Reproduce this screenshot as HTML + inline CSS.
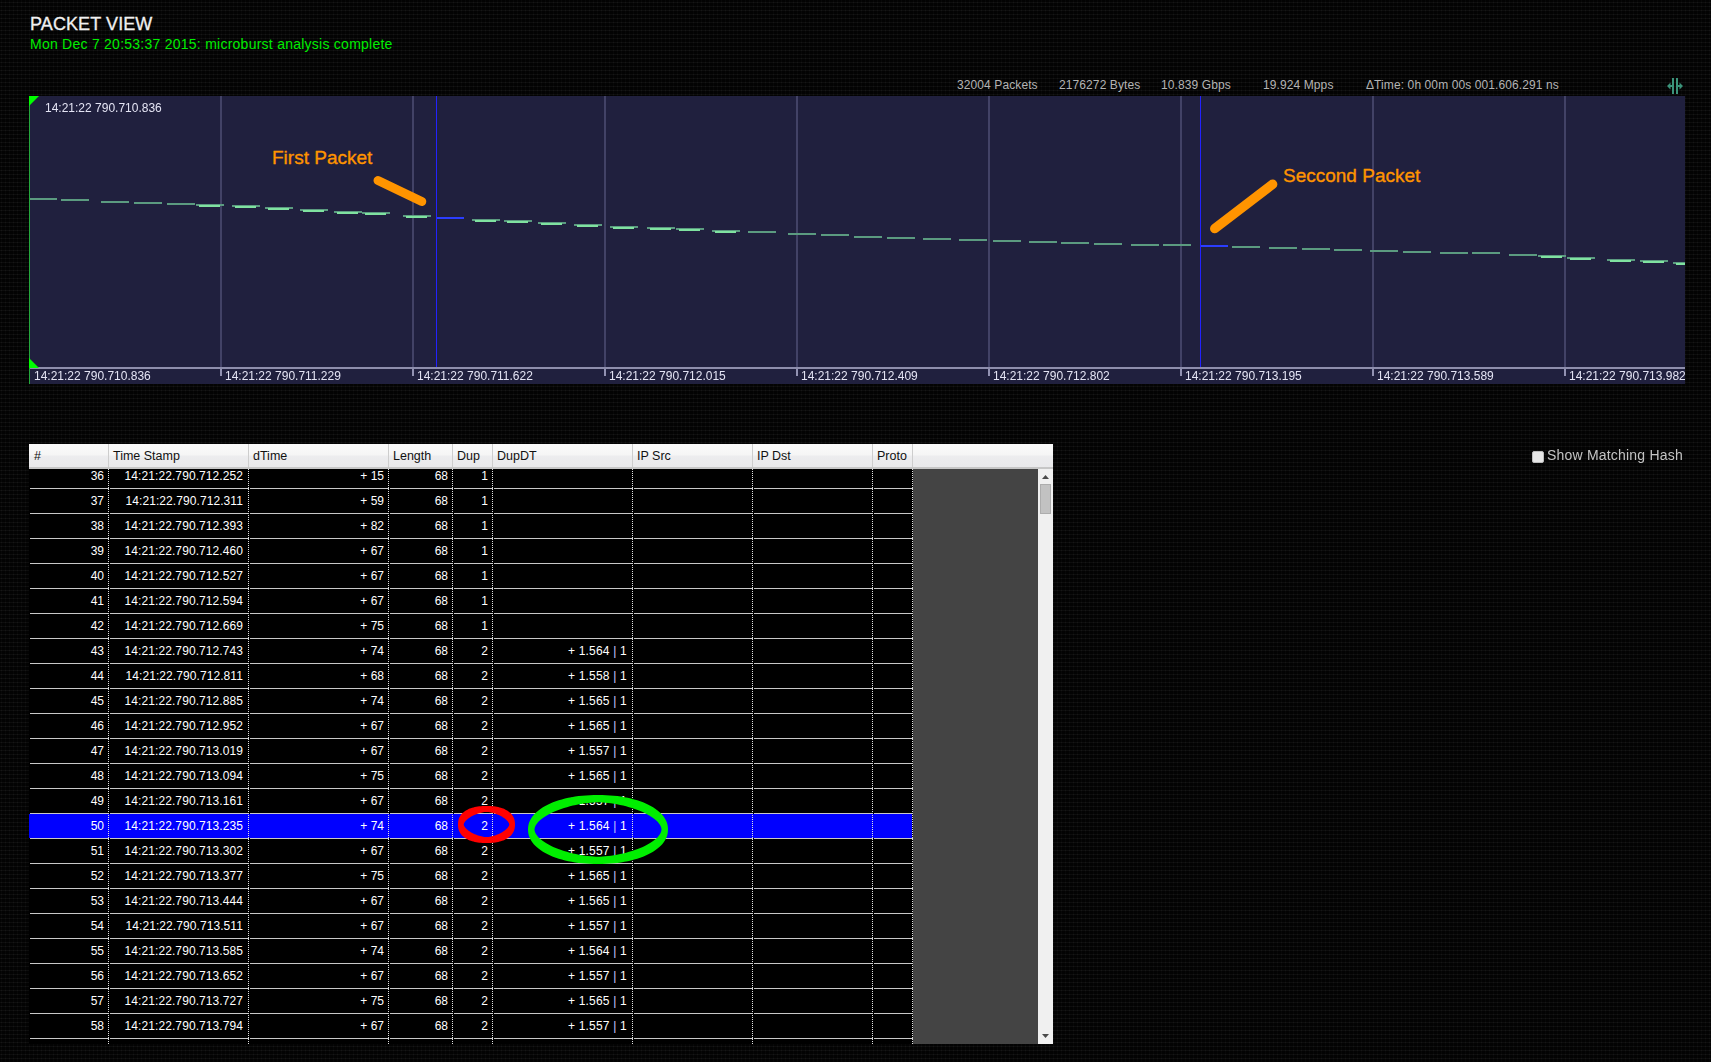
<!DOCTYPE html>
<html><head><meta charset="utf-8"><style>
html,body{margin:0;padding:0;}
body{width:1711px;height:1062px;overflow:hidden;position:relative;background-color:#030303;
font-family:"Liberation Sans", sans-serif;}
.a{position:absolute;}
.title{left:30px;top:13px;font-size:18px;color:#f0f0f0;-webkit-text-stroke:0.3px #f0f0f0;letter-spacing:0.1px;white-space:pre;line-height:22px;}
.sub{left:30px;top:35px;font-size:14px;color:#00ee00;letter-spacing:0.25px;white-space:pre;line-height:18px;}
.stat{top:77px;font-size:12px;letter-spacing:0.1px;color:#b4b4b4;white-space:pre;line-height:16px;}
.chart{left:29px;top:96px;width:1656px;height:288px;background:#20203e;overflow:hidden;}
.clabel{font-size:12px;color:#e4e4f4;white-space:pre;line-height:14px;will-change:transform;}
.ann{font-size:19px;-webkit-text-stroke:0.35px #ff9400;color:#ff9400;white-space:pre;line-height:20px;}
.thead{left:29px;top:444px;width:1024px;height:23px;background:linear-gradient(#fafafa 0%,#f6f6f6 45%,#ececee 55%,#e9e9eb 100%);border-bottom:2px solid #c6c6c6;}
.th{top:448px;font-size:12.5px;color:#111;white-space:pre;line-height:16px;}
.hsep{top:444px;width:1px;height:23px;background:#cdcdcd;}
.tbody{left:29px;top:469px;width:884px;height:575px;background:#000;overflow:hidden;}
.gray{left:913px;top:469px;width:125px;height:575px;background:#444;}
.sb{left:1038px;top:469px;width:15px;height:575px;background:#f0f0f0;}
.hl{height:1px;background:#c8c8c8;}
.td{font-size:12px;color:#fff;text-align:right;white-space:pre;line-height:16px;padding-top:5px;}
.bar{color:#c8c8ff;}
.dot{top:469px;width:1px;height:575px;background-image:linear-gradient(#e0e0e0 50%,transparent 50%);background-size:1px 2px;}
.chk{left:1532px;top:451px;width:10px;height:10px;background:#e6e6e6;border:1px solid #bbb;border-radius:2px;}
.chklbl{left:1547px;top:446px;font-size:14px;color:#c4c4c4;white-space:pre;letter-spacing:0.2px;line-height:18px;}
</style></head><body>
<svg class="a" style="left:0;top:0" width="1711" height="1062"><defs><pattern id="g" x="1" y="2" width="4" height="4" patternUnits="userSpaceOnUse"><rect x="0" y="0" width="4" height="1" fill="#0d0d0d"/><rect x="0" y="0" width="1" height="4" fill="#080808"/><rect x="0" y="0" width="1" height="1" fill="#161616"/></pattern></defs><rect width="1711" height="1062" fill="url(#g)"/></svg>
<div class="a title">PACKET VIEW</div>
<div class="a sub">Mon Dec 7 20:53:37 2015: microburst analysis complete</div>
<div class="a stat" style="left:957px">32004 Packets</div>
<div class="a stat" style="left:1059px">2176272 Bytes</div>
<div class="a stat" style="left:1161px">10.839 Gbps</div>
<div class="a stat" style="left:1263px">19.924 Mpps</div>
<div class="a stat" style="left:1366px">&#916;Time: 0h 00m 00s 001.606.291 ns</div>
<svg class="a" style="left:1660px;top:72px" width="30" height="26" viewBox="1660 72 30 26">
<rect x="1672" y="78" width="2" height="16" fill="#3b937a"/>
<rect x="1676" y="78" width="2" height="16" fill="#3b937a"/>
<polygon points="1667,86 1670.5,82.5 1670.5,85 1672,85 1672,87 1670.5,87 1670.5,89.5" fill="#3b937a"/>
<polygon points="1683,86 1679.5,82.5 1679.5,85 1678,85 1678,87 1679.5,87 1679.5,89.5" fill="#3b937a"/>
</svg>
<div class="a chart"></div>
<svg class="a" style="left:0;top:0" width="1711" height="400" viewBox="0 0 1711 400">
<rect x="220" y="96" width="2" height="271" fill="#424266"/>
<rect x="220" y="369" width="2" height="7" fill="#9292b2"/>
<rect x="412" y="96" width="2" height="271" fill="#424266"/>
<rect x="412" y="369" width="2" height="7" fill="#9292b2"/>
<rect x="604" y="96" width="2" height="271" fill="#424266"/>
<rect x="604" y="369" width="2" height="7" fill="#9292b2"/>
<rect x="796" y="96" width="2" height="271" fill="#424266"/>
<rect x="796" y="369" width="2" height="7" fill="#9292b2"/>
<rect x="988" y="96" width="2" height="271" fill="#424266"/>
<rect x="988" y="369" width="2" height="7" fill="#9292b2"/>
<rect x="1180" y="96" width="2" height="271" fill="#424266"/>
<rect x="1180" y="369" width="2" height="7" fill="#9292b2"/>
<rect x="1372" y="96" width="2" height="271" fill="#424266"/>
<rect x="1372" y="369" width="2" height="7" fill="#9292b2"/>
<rect x="1564" y="96" width="2" height="271" fill="#424266"/>
<rect x="1564" y="369" width="2" height="7" fill="#9292b2"/>
<rect x="29" y="367" width="1656" height="2" fill="#8e8eac"/>
<rect x="29" y="198" width="28" height="2" fill="#5b9b80"/>
<rect x="61" y="199" width="28" height="2" fill="#5b9b80"/>
<rect x="101" y="201" width="28" height="2" fill="#5b9b80"/>
<rect x="134" y="202" width="28" height="2" fill="#5b9b80"/>
<rect x="167" y="203" width="28" height="2" fill="#5b9b80"/>
<rect x="196" y="204" width="28" height="2" fill="#5b9b80"/>
<rect x="199" y="205" width="21" height="2" fill="#7fe2a0"/>
<rect x="232" y="205" width="28" height="2" fill="#5b9b80"/>
<rect x="235" y="206" width="21" height="2" fill="#7fe2a0"/>
<rect x="265" y="207" width="28" height="2" fill="#5b9b80"/>
<rect x="268" y="208" width="21" height="2" fill="#7fe2a0"/>
<rect x="300" y="209" width="28" height="2" fill="#5b9b80"/>
<rect x="303" y="210" width="21" height="2" fill="#7fe2a0"/>
<rect x="334" y="211" width="28" height="2" fill="#5b9b80"/>
<rect x="337" y="212" width="21" height="2" fill="#7fe2a0"/>
<rect x="362" y="212" width="28" height="2" fill="#5b9b80"/>
<rect x="365" y="213" width="21" height="2" fill="#7fe2a0"/>
<rect x="403" y="215" width="28" height="2" fill="#5b9b80"/>
<rect x="406" y="216" width="21" height="2" fill="#7fe2a0"/>
<rect x="436" y="217" width="28" height="2" fill="#2b3dff"/>
<rect x="472" y="219" width="28" height="2" fill="#5b9b80"/>
<rect x="475" y="220" width="21" height="2" fill="#7fe2a0"/>
<rect x="504" y="220" width="28" height="2" fill="#5b9b80"/>
<rect x="507" y="221" width="21" height="2" fill="#7fe2a0"/>
<rect x="538" y="222" width="28" height="2" fill="#5b9b80"/>
<rect x="541" y="223" width="21" height="2" fill="#7fe2a0"/>
<rect x="574" y="224" width="28" height="2" fill="#5b9b80"/>
<rect x="577" y="225" width="21" height="2" fill="#7fe2a0"/>
<rect x="610" y="226" width="28" height="2" fill="#5b9b80"/>
<rect x="613" y="227" width="21" height="2" fill="#7fe2a0"/>
<rect x="647" y="227" width="28" height="2" fill="#5b9b80"/>
<rect x="650" y="228" width="21" height="2" fill="#7fe2a0"/>
<rect x="676" y="228" width="28" height="2" fill="#5b9b80"/>
<rect x="679" y="229" width="21" height="2" fill="#7fe2a0"/>
<rect x="712" y="230" width="28" height="2" fill="#5b9b80"/>
<rect x="715" y="231" width="21" height="2" fill="#7fe2a0"/>
<rect x="748" y="231" width="28" height="2" fill="#5b9b80"/>
<rect x="788" y="233" width="28" height="2" fill="#5b9b80"/>
<rect x="821" y="234" width="28" height="2" fill="#5b9b80"/>
<rect x="854" y="236" width="28" height="2" fill="#5b9b80"/>
<rect x="887" y="237" width="28" height="2" fill="#5b9b80"/>
<rect x="923" y="238" width="28" height="2" fill="#5b9b80"/>
<rect x="959" y="239" width="28" height="2" fill="#5b9b80"/>
<rect x="993" y="240" width="28" height="2" fill="#5b9b80"/>
<rect x="1029" y="241" width="28" height="2" fill="#5b9b80"/>
<rect x="1061" y="242" width="28" height="2" fill="#5b9b80"/>
<rect x="1094" y="243" width="28" height="2" fill="#5b9b80"/>
<rect x="1131" y="244" width="28" height="2" fill="#5b9b80"/>
<rect x="1163" y="244" width="28" height="2" fill="#5b9b80"/>
<rect x="1200" y="245" width="28" height="2" fill="#2b3dff"/>
<rect x="1232" y="246" width="28" height="2" fill="#5b9b80"/>
<rect x="1269" y="247" width="28" height="2" fill="#5b9b80"/>
<rect x="1302" y="248" width="28" height="2" fill="#5b9b80"/>
<rect x="1334" y="249" width="28" height="2" fill="#5b9b80"/>
<rect x="1370" y="250" width="28" height="2" fill="#5b9b80"/>
<rect x="1403" y="251" width="28" height="2" fill="#5b9b80"/>
<rect x="1440" y="252" width="28" height="2" fill="#5b9b80"/>
<rect x="1472" y="252" width="28" height="2" fill="#5b9b80"/>
<rect x="1509" y="254" width="28" height="2" fill="#5b9b80"/>
<rect x="1538" y="255" width="28" height="2" fill="#5b9b80"/>
<rect x="1541" y="256" width="21" height="2" fill="#7fe2a0"/>
<rect x="1567" y="257" width="28" height="2" fill="#5b9b80"/>
<rect x="1570" y="258" width="21" height="2" fill="#7fe2a0"/>
<rect x="1607" y="259" width="28" height="2" fill="#5b9b80"/>
<rect x="1610" y="260" width="21" height="2" fill="#7fe2a0"/>
<rect x="1640" y="260" width="28" height="2" fill="#5b9b80"/>
<rect x="1643" y="261" width="21" height="2" fill="#7fe2a0"/>
<rect x="1673" y="262" width="12" height="2" fill="#5b9b80"/>
<rect x="1676" y="263" width="9" height="2" fill="#7fe2a0"/>
<rect x="436" y="96" width="1" height="271" fill="#2222ff"/>
<rect x="1200" y="96" width="1" height="271" fill="#2222ff"/>
<rect x="29" y="96" width="1" height="288" fill="#25a83c"/>
<polygon points="29,96 39,96 29,106" fill="#00ff00"/>
<polygon points="29,358 29,368 39,368" fill="#00ff00"/>
<line x1="378" y1="180.5" x2="421.8" y2="201.5" stroke="#ff9400" stroke-width="9" stroke-linecap="round"/>
<line x1="1214.8" y1="228.6" x2="1272.6" y2="184.3" stroke="#ff9400" stroke-width="9.5" stroke-linecap="round"/>
</svg>
<div class="a clabel" style="left:45px;top:101px">14:21:22 790.710.836</div>
<div class="a clabel" style="left:34px;top:369px;width:1651px;overflow:hidden">14:21:22 790.710.836</div>
<div class="a clabel" style="left:225px;top:369px;width:1460px;overflow:hidden">14:21:22 790.711.229</div>
<div class="a clabel" style="left:417px;top:369px;width:1268px;overflow:hidden">14:21:22 790.711.622</div>
<div class="a clabel" style="left:609px;top:369px;width:1076px;overflow:hidden">14:21:22 790.712.015</div>
<div class="a clabel" style="left:801px;top:369px;width:884px;overflow:hidden">14:21:22 790.712.409</div>
<div class="a clabel" style="left:993px;top:369px;width:692px;overflow:hidden">14:21:22 790.712.802</div>
<div class="a clabel" style="left:1185px;top:369px;width:500px;overflow:hidden">14:21:22 790.713.195</div>
<div class="a clabel" style="left:1377px;top:369px;width:308px;overflow:hidden">14:21:22 790.713.589</div>
<div class="a clabel" style="left:1569px;top:369px;width:116px;overflow:hidden">14:21:22 790.713.982</div>
<div class="a ann" style="left:272px;top:148px">First Packet</div>
<div class="a ann" style="left:1283px;top:166px">Seccond Packet</div>
<div class="a thead"></div>
<div class="a th" style="left:34px">#</div><div class="a th" style="left:113px">Time Stamp</div><div class="a th" style="left:253px">dTime</div><div class="a th" style="left:393px">Length</div><div class="a th" style="left:457px">Dup</div><div class="a th" style="left:497px">DupDT</div><div class="a th" style="left:637px">IP Src</div><div class="a th" style="left:757px">IP Dst</div><div class="a th" style="left:877px">Proto</div><div class="a hsep" style="left:108px"></div><div class="a hsep" style="left:248px"></div><div class="a hsep" style="left:388px"></div><div class="a hsep" style="left:452px"></div><div class="a hsep" style="left:492px"></div><div class="a hsep" style="left:632px"></div><div class="a hsep" style="left:752px"></div><div class="a hsep" style="left:872px"></div><div class="a hsep" style="left:912px"></div>
<div class="a tbody">
<div style="position:absolute;left:-29px;top:-469px;width:1100px;height:1100px">
<div class="a hl" style="left:30px;top:488px;width:79px"></div>
<div class="a hl" style="left:110px;top:488px;width:139px"></div>
<div class="a hl" style="left:250px;top:488px;width:139px"></div>
<div class="a hl" style="left:390px;top:488px;width:63px"></div>
<div class="a hl" style="left:454px;top:488px;width:39px"></div>
<div class="a hl" style="left:494px;top:488px;width:139px"></div>
<div class="a hl" style="left:634px;top:488px;width:119px"></div>
<div class="a hl" style="left:754px;top:488px;width:119px"></div>
<div class="a hl" style="left:874px;top:488px;width:39px"></div>
<div class="a td" style="left:29px;top:463px;width:75px;">36</div>
<div class="a td" style="left:108px;top:463px;width:135px;letter-spacing:0.08px;">14:21:22.790.712.252</div>
<div class="a td" style="left:248px;top:463px;width:136px;">+ 15</div>
<div class="a td" style="left:388px;top:463px;width:60px;">68</div>
<div class="a td" style="left:452px;top:463px;width:36px;">1</div>
<div class="a hl" style="left:30px;top:513px;width:79px"></div>
<div class="a hl" style="left:110px;top:513px;width:139px"></div>
<div class="a hl" style="left:250px;top:513px;width:139px"></div>
<div class="a hl" style="left:390px;top:513px;width:63px"></div>
<div class="a hl" style="left:454px;top:513px;width:39px"></div>
<div class="a hl" style="left:494px;top:513px;width:139px"></div>
<div class="a hl" style="left:634px;top:513px;width:119px"></div>
<div class="a hl" style="left:754px;top:513px;width:119px"></div>
<div class="a hl" style="left:874px;top:513px;width:39px"></div>
<div class="a td" style="left:29px;top:488px;width:75px;">37</div>
<div class="a td" style="left:108px;top:488px;width:135px;letter-spacing:0.08px;">14:21:22.790.712.311</div>
<div class="a td" style="left:248px;top:488px;width:136px;">+ 59</div>
<div class="a td" style="left:388px;top:488px;width:60px;">68</div>
<div class="a td" style="left:452px;top:488px;width:36px;">1</div>
<div class="a hl" style="left:30px;top:538px;width:79px"></div>
<div class="a hl" style="left:110px;top:538px;width:139px"></div>
<div class="a hl" style="left:250px;top:538px;width:139px"></div>
<div class="a hl" style="left:390px;top:538px;width:63px"></div>
<div class="a hl" style="left:454px;top:538px;width:39px"></div>
<div class="a hl" style="left:494px;top:538px;width:139px"></div>
<div class="a hl" style="left:634px;top:538px;width:119px"></div>
<div class="a hl" style="left:754px;top:538px;width:119px"></div>
<div class="a hl" style="left:874px;top:538px;width:39px"></div>
<div class="a td" style="left:29px;top:513px;width:75px;">38</div>
<div class="a td" style="left:108px;top:513px;width:135px;letter-spacing:0.08px;">14:21:22.790.712.393</div>
<div class="a td" style="left:248px;top:513px;width:136px;">+ 82</div>
<div class="a td" style="left:388px;top:513px;width:60px;">68</div>
<div class="a td" style="left:452px;top:513px;width:36px;">1</div>
<div class="a hl" style="left:30px;top:563px;width:79px"></div>
<div class="a hl" style="left:110px;top:563px;width:139px"></div>
<div class="a hl" style="left:250px;top:563px;width:139px"></div>
<div class="a hl" style="left:390px;top:563px;width:63px"></div>
<div class="a hl" style="left:454px;top:563px;width:39px"></div>
<div class="a hl" style="left:494px;top:563px;width:139px"></div>
<div class="a hl" style="left:634px;top:563px;width:119px"></div>
<div class="a hl" style="left:754px;top:563px;width:119px"></div>
<div class="a hl" style="left:874px;top:563px;width:39px"></div>
<div class="a td" style="left:29px;top:538px;width:75px;">39</div>
<div class="a td" style="left:108px;top:538px;width:135px;letter-spacing:0.08px;">14:21:22.790.712.460</div>
<div class="a td" style="left:248px;top:538px;width:136px;">+ 67</div>
<div class="a td" style="left:388px;top:538px;width:60px;">68</div>
<div class="a td" style="left:452px;top:538px;width:36px;">1</div>
<div class="a hl" style="left:30px;top:588px;width:79px"></div>
<div class="a hl" style="left:110px;top:588px;width:139px"></div>
<div class="a hl" style="left:250px;top:588px;width:139px"></div>
<div class="a hl" style="left:390px;top:588px;width:63px"></div>
<div class="a hl" style="left:454px;top:588px;width:39px"></div>
<div class="a hl" style="left:494px;top:588px;width:139px"></div>
<div class="a hl" style="left:634px;top:588px;width:119px"></div>
<div class="a hl" style="left:754px;top:588px;width:119px"></div>
<div class="a hl" style="left:874px;top:588px;width:39px"></div>
<div class="a td" style="left:29px;top:563px;width:75px;">40</div>
<div class="a td" style="left:108px;top:563px;width:135px;letter-spacing:0.08px;">14:21:22.790.712.527</div>
<div class="a td" style="left:248px;top:563px;width:136px;">+ 67</div>
<div class="a td" style="left:388px;top:563px;width:60px;">68</div>
<div class="a td" style="left:452px;top:563px;width:36px;">1</div>
<div class="a hl" style="left:30px;top:613px;width:79px"></div>
<div class="a hl" style="left:110px;top:613px;width:139px"></div>
<div class="a hl" style="left:250px;top:613px;width:139px"></div>
<div class="a hl" style="left:390px;top:613px;width:63px"></div>
<div class="a hl" style="left:454px;top:613px;width:39px"></div>
<div class="a hl" style="left:494px;top:613px;width:139px"></div>
<div class="a hl" style="left:634px;top:613px;width:119px"></div>
<div class="a hl" style="left:754px;top:613px;width:119px"></div>
<div class="a hl" style="left:874px;top:613px;width:39px"></div>
<div class="a td" style="left:29px;top:588px;width:75px;">41</div>
<div class="a td" style="left:108px;top:588px;width:135px;letter-spacing:0.08px;">14:21:22.790.712.594</div>
<div class="a td" style="left:248px;top:588px;width:136px;">+ 67</div>
<div class="a td" style="left:388px;top:588px;width:60px;">68</div>
<div class="a td" style="left:452px;top:588px;width:36px;">1</div>
<div class="a hl" style="left:30px;top:638px;width:79px"></div>
<div class="a hl" style="left:110px;top:638px;width:139px"></div>
<div class="a hl" style="left:250px;top:638px;width:139px"></div>
<div class="a hl" style="left:390px;top:638px;width:63px"></div>
<div class="a hl" style="left:454px;top:638px;width:39px"></div>
<div class="a hl" style="left:494px;top:638px;width:139px"></div>
<div class="a hl" style="left:634px;top:638px;width:119px"></div>
<div class="a hl" style="left:754px;top:638px;width:119px"></div>
<div class="a hl" style="left:874px;top:638px;width:39px"></div>
<div class="a td" style="left:29px;top:613px;width:75px;">42</div>
<div class="a td" style="left:108px;top:613px;width:135px;letter-spacing:0.08px;">14:21:22.790.712.669</div>
<div class="a td" style="left:248px;top:613px;width:136px;">+ 75</div>
<div class="a td" style="left:388px;top:613px;width:60px;">68</div>
<div class="a td" style="left:452px;top:613px;width:36px;">1</div>
<div class="a hl" style="left:30px;top:663px;width:79px"></div>
<div class="a hl" style="left:110px;top:663px;width:139px"></div>
<div class="a hl" style="left:250px;top:663px;width:139px"></div>
<div class="a hl" style="left:390px;top:663px;width:63px"></div>
<div class="a hl" style="left:454px;top:663px;width:39px"></div>
<div class="a hl" style="left:494px;top:663px;width:139px"></div>
<div class="a hl" style="left:634px;top:663px;width:119px"></div>
<div class="a hl" style="left:754px;top:663px;width:119px"></div>
<div class="a hl" style="left:874px;top:663px;width:39px"></div>
<div class="a td" style="left:29px;top:638px;width:75px;">43</div>
<div class="a td" style="left:108px;top:638px;width:135px;letter-spacing:0.08px;">14:21:22.790.712.743</div>
<div class="a td" style="left:248px;top:638px;width:136px;">+ 74</div>
<div class="a td" style="left:388px;top:638px;width:60px;">68</div>
<div class="a td" style="left:452px;top:638px;width:36px;">2</div>
<div class="a td" style="left:492px;top:638px;width:135px;letter-spacing:0.2px;">+ 1.564 <span class="bar">|</span> 1</div>
<div class="a hl" style="left:30px;top:688px;width:79px"></div>
<div class="a hl" style="left:110px;top:688px;width:139px"></div>
<div class="a hl" style="left:250px;top:688px;width:139px"></div>
<div class="a hl" style="left:390px;top:688px;width:63px"></div>
<div class="a hl" style="left:454px;top:688px;width:39px"></div>
<div class="a hl" style="left:494px;top:688px;width:139px"></div>
<div class="a hl" style="left:634px;top:688px;width:119px"></div>
<div class="a hl" style="left:754px;top:688px;width:119px"></div>
<div class="a hl" style="left:874px;top:688px;width:39px"></div>
<div class="a td" style="left:29px;top:663px;width:75px;">44</div>
<div class="a td" style="left:108px;top:663px;width:135px;letter-spacing:0.08px;">14:21:22.790.712.811</div>
<div class="a td" style="left:248px;top:663px;width:136px;">+ 68</div>
<div class="a td" style="left:388px;top:663px;width:60px;">68</div>
<div class="a td" style="left:452px;top:663px;width:36px;">2</div>
<div class="a td" style="left:492px;top:663px;width:135px;letter-spacing:0.2px;">+ 1.558 <span class="bar">|</span> 1</div>
<div class="a hl" style="left:30px;top:713px;width:79px"></div>
<div class="a hl" style="left:110px;top:713px;width:139px"></div>
<div class="a hl" style="left:250px;top:713px;width:139px"></div>
<div class="a hl" style="left:390px;top:713px;width:63px"></div>
<div class="a hl" style="left:454px;top:713px;width:39px"></div>
<div class="a hl" style="left:494px;top:713px;width:139px"></div>
<div class="a hl" style="left:634px;top:713px;width:119px"></div>
<div class="a hl" style="left:754px;top:713px;width:119px"></div>
<div class="a hl" style="left:874px;top:713px;width:39px"></div>
<div class="a td" style="left:29px;top:688px;width:75px;">45</div>
<div class="a td" style="left:108px;top:688px;width:135px;letter-spacing:0.08px;">14:21:22.790.712.885</div>
<div class="a td" style="left:248px;top:688px;width:136px;">+ 74</div>
<div class="a td" style="left:388px;top:688px;width:60px;">68</div>
<div class="a td" style="left:452px;top:688px;width:36px;">2</div>
<div class="a td" style="left:492px;top:688px;width:135px;letter-spacing:0.2px;">+ 1.565 <span class="bar">|</span> 1</div>
<div class="a hl" style="left:30px;top:738px;width:79px"></div>
<div class="a hl" style="left:110px;top:738px;width:139px"></div>
<div class="a hl" style="left:250px;top:738px;width:139px"></div>
<div class="a hl" style="left:390px;top:738px;width:63px"></div>
<div class="a hl" style="left:454px;top:738px;width:39px"></div>
<div class="a hl" style="left:494px;top:738px;width:139px"></div>
<div class="a hl" style="left:634px;top:738px;width:119px"></div>
<div class="a hl" style="left:754px;top:738px;width:119px"></div>
<div class="a hl" style="left:874px;top:738px;width:39px"></div>
<div class="a td" style="left:29px;top:713px;width:75px;">46</div>
<div class="a td" style="left:108px;top:713px;width:135px;letter-spacing:0.08px;">14:21:22.790.712.952</div>
<div class="a td" style="left:248px;top:713px;width:136px;">+ 67</div>
<div class="a td" style="left:388px;top:713px;width:60px;">68</div>
<div class="a td" style="left:452px;top:713px;width:36px;">2</div>
<div class="a td" style="left:492px;top:713px;width:135px;letter-spacing:0.2px;">+ 1.565 <span class="bar">|</span> 1</div>
<div class="a hl" style="left:30px;top:763px;width:79px"></div>
<div class="a hl" style="left:110px;top:763px;width:139px"></div>
<div class="a hl" style="left:250px;top:763px;width:139px"></div>
<div class="a hl" style="left:390px;top:763px;width:63px"></div>
<div class="a hl" style="left:454px;top:763px;width:39px"></div>
<div class="a hl" style="left:494px;top:763px;width:139px"></div>
<div class="a hl" style="left:634px;top:763px;width:119px"></div>
<div class="a hl" style="left:754px;top:763px;width:119px"></div>
<div class="a hl" style="left:874px;top:763px;width:39px"></div>
<div class="a td" style="left:29px;top:738px;width:75px;">47</div>
<div class="a td" style="left:108px;top:738px;width:135px;letter-spacing:0.08px;">14:21:22.790.713.019</div>
<div class="a td" style="left:248px;top:738px;width:136px;">+ 67</div>
<div class="a td" style="left:388px;top:738px;width:60px;">68</div>
<div class="a td" style="left:452px;top:738px;width:36px;">2</div>
<div class="a td" style="left:492px;top:738px;width:135px;letter-spacing:0.2px;">+ 1.557 <span class="bar">|</span> 1</div>
<div class="a hl" style="left:30px;top:788px;width:79px"></div>
<div class="a hl" style="left:110px;top:788px;width:139px"></div>
<div class="a hl" style="left:250px;top:788px;width:139px"></div>
<div class="a hl" style="left:390px;top:788px;width:63px"></div>
<div class="a hl" style="left:454px;top:788px;width:39px"></div>
<div class="a hl" style="left:494px;top:788px;width:139px"></div>
<div class="a hl" style="left:634px;top:788px;width:119px"></div>
<div class="a hl" style="left:754px;top:788px;width:119px"></div>
<div class="a hl" style="left:874px;top:788px;width:39px"></div>
<div class="a td" style="left:29px;top:763px;width:75px;">48</div>
<div class="a td" style="left:108px;top:763px;width:135px;letter-spacing:0.08px;">14:21:22.790.713.094</div>
<div class="a td" style="left:248px;top:763px;width:136px;">+ 75</div>
<div class="a td" style="left:388px;top:763px;width:60px;">68</div>
<div class="a td" style="left:452px;top:763px;width:36px;">2</div>
<div class="a td" style="left:492px;top:763px;width:135px;letter-spacing:0.2px;">+ 1.565 <span class="bar">|</span> 1</div>
<div class="a hl" style="left:30px;top:813px;width:79px"></div>
<div class="a hl" style="left:110px;top:813px;width:139px"></div>
<div class="a hl" style="left:250px;top:813px;width:139px"></div>
<div class="a hl" style="left:390px;top:813px;width:63px"></div>
<div class="a hl" style="left:454px;top:813px;width:39px"></div>
<div class="a hl" style="left:494px;top:813px;width:139px"></div>
<div class="a hl" style="left:634px;top:813px;width:119px"></div>
<div class="a hl" style="left:754px;top:813px;width:119px"></div>
<div class="a hl" style="left:874px;top:813px;width:39px"></div>
<div class="a td" style="left:29px;top:788px;width:75px;">49</div>
<div class="a td" style="left:108px;top:788px;width:135px;letter-spacing:0.08px;">14:21:22.790.713.161</div>
<div class="a td" style="left:248px;top:788px;width:136px;">+ 67</div>
<div class="a td" style="left:388px;top:788px;width:60px;">68</div>
<div class="a td" style="left:452px;top:788px;width:36px;">2</div>
<div class="a td" style="left:492px;top:788px;width:135px;letter-spacing:0.2px;">+ 1.557 <span class="bar">|</span> 1</div>
<div class="a" style="left:29px;top:814px;width:883px;height:24px;background:#0000ff"></div>
<div class="a hl" style="left:30px;top:838px;width:79px"></div>
<div class="a hl" style="left:110px;top:838px;width:139px"></div>
<div class="a hl" style="left:250px;top:838px;width:139px"></div>
<div class="a hl" style="left:390px;top:838px;width:63px"></div>
<div class="a hl" style="left:454px;top:838px;width:39px"></div>
<div class="a hl" style="left:494px;top:838px;width:139px"></div>
<div class="a hl" style="left:634px;top:838px;width:119px"></div>
<div class="a hl" style="left:754px;top:838px;width:119px"></div>
<div class="a hl" style="left:874px;top:838px;width:39px"></div>
<div class="a td" style="left:29px;top:813px;width:75px;">50</div>
<div class="a td" style="left:108px;top:813px;width:135px;letter-spacing:0.08px;">14:21:22.790.713.235</div>
<div class="a td" style="left:248px;top:813px;width:136px;">+ 74</div>
<div class="a td" style="left:388px;top:813px;width:60px;">68</div>
<div class="a td" style="left:452px;top:813px;width:36px;">2</div>
<div class="a td" style="left:492px;top:813px;width:135px;letter-spacing:0.2px;">+ 1.564 <span class="bar">|</span> 1</div>
<div class="a hl" style="left:30px;top:863px;width:79px"></div>
<div class="a hl" style="left:110px;top:863px;width:139px"></div>
<div class="a hl" style="left:250px;top:863px;width:139px"></div>
<div class="a hl" style="left:390px;top:863px;width:63px"></div>
<div class="a hl" style="left:454px;top:863px;width:39px"></div>
<div class="a hl" style="left:494px;top:863px;width:139px"></div>
<div class="a hl" style="left:634px;top:863px;width:119px"></div>
<div class="a hl" style="left:754px;top:863px;width:119px"></div>
<div class="a hl" style="left:874px;top:863px;width:39px"></div>
<div class="a td" style="left:29px;top:838px;width:75px;">51</div>
<div class="a td" style="left:108px;top:838px;width:135px;letter-spacing:0.08px;">14:21:22.790.713.302</div>
<div class="a td" style="left:248px;top:838px;width:136px;">+ 67</div>
<div class="a td" style="left:388px;top:838px;width:60px;">68</div>
<div class="a td" style="left:452px;top:838px;width:36px;">2</div>
<div class="a td" style="left:492px;top:838px;width:135px;letter-spacing:0.2px;">+ 1.557 <span class="bar">|</span> 1</div>
<div class="a hl" style="left:30px;top:888px;width:79px"></div>
<div class="a hl" style="left:110px;top:888px;width:139px"></div>
<div class="a hl" style="left:250px;top:888px;width:139px"></div>
<div class="a hl" style="left:390px;top:888px;width:63px"></div>
<div class="a hl" style="left:454px;top:888px;width:39px"></div>
<div class="a hl" style="left:494px;top:888px;width:139px"></div>
<div class="a hl" style="left:634px;top:888px;width:119px"></div>
<div class="a hl" style="left:754px;top:888px;width:119px"></div>
<div class="a hl" style="left:874px;top:888px;width:39px"></div>
<div class="a td" style="left:29px;top:863px;width:75px;">52</div>
<div class="a td" style="left:108px;top:863px;width:135px;letter-spacing:0.08px;">14:21:22.790.713.377</div>
<div class="a td" style="left:248px;top:863px;width:136px;">+ 75</div>
<div class="a td" style="left:388px;top:863px;width:60px;">68</div>
<div class="a td" style="left:452px;top:863px;width:36px;">2</div>
<div class="a td" style="left:492px;top:863px;width:135px;letter-spacing:0.2px;">+ 1.565 <span class="bar">|</span> 1</div>
<div class="a hl" style="left:30px;top:913px;width:79px"></div>
<div class="a hl" style="left:110px;top:913px;width:139px"></div>
<div class="a hl" style="left:250px;top:913px;width:139px"></div>
<div class="a hl" style="left:390px;top:913px;width:63px"></div>
<div class="a hl" style="left:454px;top:913px;width:39px"></div>
<div class="a hl" style="left:494px;top:913px;width:139px"></div>
<div class="a hl" style="left:634px;top:913px;width:119px"></div>
<div class="a hl" style="left:754px;top:913px;width:119px"></div>
<div class="a hl" style="left:874px;top:913px;width:39px"></div>
<div class="a td" style="left:29px;top:888px;width:75px;">53</div>
<div class="a td" style="left:108px;top:888px;width:135px;letter-spacing:0.08px;">14:21:22.790.713.444</div>
<div class="a td" style="left:248px;top:888px;width:136px;">+ 67</div>
<div class="a td" style="left:388px;top:888px;width:60px;">68</div>
<div class="a td" style="left:452px;top:888px;width:36px;">2</div>
<div class="a td" style="left:492px;top:888px;width:135px;letter-spacing:0.2px;">+ 1.565 <span class="bar">|</span> 1</div>
<div class="a hl" style="left:30px;top:938px;width:79px"></div>
<div class="a hl" style="left:110px;top:938px;width:139px"></div>
<div class="a hl" style="left:250px;top:938px;width:139px"></div>
<div class="a hl" style="left:390px;top:938px;width:63px"></div>
<div class="a hl" style="left:454px;top:938px;width:39px"></div>
<div class="a hl" style="left:494px;top:938px;width:139px"></div>
<div class="a hl" style="left:634px;top:938px;width:119px"></div>
<div class="a hl" style="left:754px;top:938px;width:119px"></div>
<div class="a hl" style="left:874px;top:938px;width:39px"></div>
<div class="a td" style="left:29px;top:913px;width:75px;">54</div>
<div class="a td" style="left:108px;top:913px;width:135px;letter-spacing:0.08px;">14:21:22.790.713.511</div>
<div class="a td" style="left:248px;top:913px;width:136px;">+ 67</div>
<div class="a td" style="left:388px;top:913px;width:60px;">68</div>
<div class="a td" style="left:452px;top:913px;width:36px;">2</div>
<div class="a td" style="left:492px;top:913px;width:135px;letter-spacing:0.2px;">+ 1.557 <span class="bar">|</span> 1</div>
<div class="a hl" style="left:30px;top:963px;width:79px"></div>
<div class="a hl" style="left:110px;top:963px;width:139px"></div>
<div class="a hl" style="left:250px;top:963px;width:139px"></div>
<div class="a hl" style="left:390px;top:963px;width:63px"></div>
<div class="a hl" style="left:454px;top:963px;width:39px"></div>
<div class="a hl" style="left:494px;top:963px;width:139px"></div>
<div class="a hl" style="left:634px;top:963px;width:119px"></div>
<div class="a hl" style="left:754px;top:963px;width:119px"></div>
<div class="a hl" style="left:874px;top:963px;width:39px"></div>
<div class="a td" style="left:29px;top:938px;width:75px;">55</div>
<div class="a td" style="left:108px;top:938px;width:135px;letter-spacing:0.08px;">14:21:22.790.713.585</div>
<div class="a td" style="left:248px;top:938px;width:136px;">+ 74</div>
<div class="a td" style="left:388px;top:938px;width:60px;">68</div>
<div class="a td" style="left:452px;top:938px;width:36px;">2</div>
<div class="a td" style="left:492px;top:938px;width:135px;letter-spacing:0.2px;">+ 1.564 <span class="bar">|</span> 1</div>
<div class="a hl" style="left:30px;top:988px;width:79px"></div>
<div class="a hl" style="left:110px;top:988px;width:139px"></div>
<div class="a hl" style="left:250px;top:988px;width:139px"></div>
<div class="a hl" style="left:390px;top:988px;width:63px"></div>
<div class="a hl" style="left:454px;top:988px;width:39px"></div>
<div class="a hl" style="left:494px;top:988px;width:139px"></div>
<div class="a hl" style="left:634px;top:988px;width:119px"></div>
<div class="a hl" style="left:754px;top:988px;width:119px"></div>
<div class="a hl" style="left:874px;top:988px;width:39px"></div>
<div class="a td" style="left:29px;top:963px;width:75px;">56</div>
<div class="a td" style="left:108px;top:963px;width:135px;letter-spacing:0.08px;">14:21:22.790.713.652</div>
<div class="a td" style="left:248px;top:963px;width:136px;">+ 67</div>
<div class="a td" style="left:388px;top:963px;width:60px;">68</div>
<div class="a td" style="left:452px;top:963px;width:36px;">2</div>
<div class="a td" style="left:492px;top:963px;width:135px;letter-spacing:0.2px;">+ 1.557 <span class="bar">|</span> 1</div>
<div class="a hl" style="left:30px;top:1013px;width:79px"></div>
<div class="a hl" style="left:110px;top:1013px;width:139px"></div>
<div class="a hl" style="left:250px;top:1013px;width:139px"></div>
<div class="a hl" style="left:390px;top:1013px;width:63px"></div>
<div class="a hl" style="left:454px;top:1013px;width:39px"></div>
<div class="a hl" style="left:494px;top:1013px;width:139px"></div>
<div class="a hl" style="left:634px;top:1013px;width:119px"></div>
<div class="a hl" style="left:754px;top:1013px;width:119px"></div>
<div class="a hl" style="left:874px;top:1013px;width:39px"></div>
<div class="a td" style="left:29px;top:988px;width:75px;">57</div>
<div class="a td" style="left:108px;top:988px;width:135px;letter-spacing:0.08px;">14:21:22.790.713.727</div>
<div class="a td" style="left:248px;top:988px;width:136px;">+ 75</div>
<div class="a td" style="left:388px;top:988px;width:60px;">68</div>
<div class="a td" style="left:452px;top:988px;width:36px;">2</div>
<div class="a td" style="left:492px;top:988px;width:135px;letter-spacing:0.2px;">+ 1.565 <span class="bar">|</span> 1</div>
<div class="a hl" style="left:30px;top:1038px;width:79px"></div>
<div class="a hl" style="left:110px;top:1038px;width:139px"></div>
<div class="a hl" style="left:250px;top:1038px;width:139px"></div>
<div class="a hl" style="left:390px;top:1038px;width:63px"></div>
<div class="a hl" style="left:454px;top:1038px;width:39px"></div>
<div class="a hl" style="left:494px;top:1038px;width:139px"></div>
<div class="a hl" style="left:634px;top:1038px;width:119px"></div>
<div class="a hl" style="left:754px;top:1038px;width:119px"></div>
<div class="a hl" style="left:874px;top:1038px;width:39px"></div>
<div class="a td" style="left:29px;top:1013px;width:75px;">58</div>
<div class="a td" style="left:108px;top:1013px;width:135px;letter-spacing:0.08px;">14:21:22.790.713.794</div>
<div class="a td" style="left:248px;top:1013px;width:136px;">+ 67</div>
<div class="a td" style="left:388px;top:1013px;width:60px;">68</div>
<div class="a td" style="left:452px;top:1013px;width:36px;">2</div>
<div class="a td" style="left:492px;top:1013px;width:135px;letter-spacing:0.2px;">+ 1.557 <span class="bar">|</span> 1</div>
<div class="a hl" style="left:30px;top:1063px;width:79px"></div>
<div class="a hl" style="left:110px;top:1063px;width:139px"></div>
<div class="a hl" style="left:250px;top:1063px;width:139px"></div>
<div class="a hl" style="left:390px;top:1063px;width:63px"></div>
<div class="a hl" style="left:454px;top:1063px;width:39px"></div>
<div class="a hl" style="left:494px;top:1063px;width:139px"></div>
<div class="a hl" style="left:634px;top:1063px;width:119px"></div>
<div class="a hl" style="left:754px;top:1063px;width:119px"></div>
<div class="a hl" style="left:874px;top:1063px;width:39px"></div>
<div class="a td" style="left:29px;top:1038px;width:75px;">59</div>
<div class="a td" style="left:108px;top:1038px;width:135px;letter-spacing:0.08px;">14:21:22.790.713.861</div>
<div class="a td" style="left:248px;top:1038px;width:136px;">+ 67</div>
<div class="a td" style="left:388px;top:1038px;width:60px;">68</div>
<div class="a td" style="left:452px;top:1038px;width:36px;">2</div>
<div class="a td" style="left:492px;top:1038px;width:135px;letter-spacing:0.2px;">+ 1.557 <span class="bar">|</span> 1</div><div class="a dot"  style="left:108px"></div><div class="a dot"  style="left:248px"></div><div class="a dot"  style="left:388px"></div><div class="a dot"  style="left:452px"></div><div class="a dot"  style="left:492px"></div><div class="a dot"  style="left:632px"></div><div class="a dot"  style="left:752px"></div><div class="a dot"  style="left:872px"></div><div class="a dot"  style="left:912px"></div>
</div></div>
<div class="a gray"></div>
<div class="a sb">
<svg style="position:absolute;left:0;top:0" width="15" height="575">
<polygon points="4,10 11,10 7.5,6" fill="#4a4a4a"/>
<polygon points="4,565 11,565 7.5,569" fill="#4a4a4a"/>
<rect x="2.5" y="15.5" width="10" height="29" fill="#c2c2c2" stroke="#adadad"/>
</svg></div>
<svg class="a" style="left:0;top:0" width="1711" height="1062" viewBox="0 0 1711 1062">
<path fill-rule="evenodd" fill="#ff0000" d="M515.00,824.50 L514.97,825.92 L514.86,827.10 L514.69,828.19 L514.46,829.22 L514.15,830.21 L513.78,831.16 L513.35,832.08 L512.84,832.96 L512.28,833.81 L511.65,834.63 L510.96,835.41 L510.20,836.15 L509.39,836.87 L508.52,837.54 L507.58,838.19 L506.60,838.79 L505.55,839.36 L504.45,839.89 L503.30,840.38 L502.10,840.82 L500.84,841.23 L499.54,841.60 L498.18,841.93 L496.76,842.21 L495.30,842.45 L493.77,842.65 L492.18,842.80 L490.50,842.91 L488.69,842.98 L486.50,843.00 L484.31,842.98 L482.50,842.91 L480.82,842.80 L479.23,842.65 L477.70,842.45 L476.24,842.21 L474.82,841.93 L473.46,841.60 L472.16,841.23 L470.90,840.82 L469.70,840.38 L468.55,839.89 L467.45,839.36 L466.40,838.79 L465.42,838.19 L464.48,837.54 L463.61,836.87 L462.80,836.15 L462.04,835.41 L461.35,834.63 L460.72,833.81 L460.16,832.96 L459.65,832.08 L459.22,831.16 L458.85,830.21 L458.54,829.22 L458.31,828.19 L458.14,827.10 L458.03,825.92 L458.00,824.50 L458.03,823.08 L458.14,821.90 L458.31,820.81 L458.54,819.78 L458.85,818.79 L459.22,817.84 L459.65,816.92 L460.16,816.04 L460.72,815.19 L461.35,814.37 L462.04,813.59 L462.80,812.85 L463.61,812.13 L464.48,811.46 L465.42,810.81 L466.40,810.21 L467.45,809.64 L468.55,809.11 L469.70,808.62 L470.90,808.18 L472.16,807.77 L473.46,807.40 L474.82,807.07 L476.24,806.79 L477.70,806.55 L479.23,806.35 L480.82,806.20 L482.50,806.09 L484.31,806.02 L486.50,806.00 L488.69,806.02 L490.50,806.09 L492.18,806.20 L493.77,806.35 L495.30,806.55 L496.76,806.79 L498.18,807.07 L499.54,807.40 L500.84,807.77 L502.10,808.18 L503.30,808.62 L504.45,809.11 L505.55,809.64 L506.60,810.21 L507.58,810.81 L508.52,811.46 L509.39,812.13 L510.20,812.85 L510.96,813.59 L511.65,814.37 L512.28,815.19 L512.84,816.04 L513.35,816.92 L513.78,817.84 L514.15,818.79 L514.46,819.78 L514.69,820.81 L514.86,821.90 L514.97,823.08 Z M509.30,824.50 L509.26,824.82 L509.14,825.25 L508.95,825.74 L508.68,826.27 L508.33,826.83 L507.91,827.40 L507.42,827.99 L506.86,828.59 L506.24,829.20 L505.55,829.80 L504.80,830.40 L503.99,830.98 L503.14,831.56 L502.23,832.13 L501.28,832.67 L500.30,833.19 L499.28,833.69 L498.23,834.17 L497.17,834.61 L496.09,835.03 L495.00,835.41 L493.91,835.75 L492.82,836.06 L491.75,836.33 L490.71,836.57 L489.70,836.76 L488.74,836.91 L487.86,837.01 L487.07,837.08 L486.50,837.10 L485.93,837.08 L485.14,837.01 L484.26,836.91 L483.30,836.76 L482.29,836.57 L481.25,836.33 L480.18,836.06 L479.09,835.75 L478.00,835.41 L476.91,835.03 L475.83,834.61 L474.77,834.17 L473.72,833.69 L472.70,833.19 L471.72,832.67 L470.77,832.13 L469.86,831.56 L469.01,830.98 L468.20,830.40 L467.45,829.80 L466.76,829.20 L466.14,828.59 L465.58,827.99 L465.09,827.40 L464.67,826.83 L464.32,826.27 L464.05,825.74 L463.86,825.25 L463.74,824.82 L463.70,824.50 L463.74,824.18 L463.86,823.75 L464.05,823.26 L464.32,822.73 L464.67,822.17 L465.09,821.60 L465.58,821.01 L466.14,820.41 L466.76,819.80 L467.45,819.20 L468.20,818.60 L469.01,818.02 L469.86,817.44 L470.77,816.87 L471.72,816.33 L472.70,815.81 L473.72,815.31 L474.77,814.83 L475.83,814.39 L476.91,813.97 L478.00,813.59 L479.09,813.25 L480.18,812.94 L481.25,812.67 L482.29,812.43 L483.30,812.24 L484.26,812.09 L485.14,811.99 L485.93,811.92 L486.50,811.90 L487.07,811.92 L487.86,811.99 L488.74,812.09 L489.70,812.24 L490.71,812.43 L491.75,812.67 L492.82,812.94 L493.91,813.25 L495.00,813.59 L496.09,813.97 L497.17,814.39 L498.23,814.83 L499.28,815.31 L500.30,815.81 L501.28,816.33 L502.23,816.87 L503.14,817.44 L503.99,818.02 L504.80,818.60 L505.55,819.20 L506.24,819.80 L506.86,820.41 L507.42,821.01 L507.91,821.60 L508.33,822.17 L508.68,822.73 L508.95,823.26 L509.14,823.75 L509.26,824.18 Z"/>
<path fill-rule="evenodd" fill="#00ee00" d="M668.00,829.50 L667.91,831.58 L667.63,833.52 L667.18,835.40 L666.54,837.23 L665.73,839.02 L664.73,840.77 L663.56,842.48 L662.22,844.15 L660.71,845.76 L659.04,847.33 L657.20,848.84 L655.21,850.30 L653.06,851.70 L650.76,853.03 L648.32,854.30 L645.74,855.50 L643.03,856.64 L640.20,857.69 L637.24,858.68 L634.17,859.58 L631.00,860.41 L627.72,861.15 L624.34,861.81 L620.88,862.39 L617.32,862.88 L613.68,863.28 L609.96,863.60 L606.15,863.82 L602.22,863.95 L598.00,864.00 L593.78,863.95 L589.85,863.82 L586.04,863.60 L582.32,863.28 L578.68,862.88 L575.12,862.39 L571.66,861.81 L568.28,861.15 L565.00,860.41 L561.83,859.58 L558.76,858.68 L555.80,857.69 L552.97,856.64 L550.26,855.50 L547.68,854.30 L545.24,853.03 L542.94,851.70 L540.79,850.30 L538.80,848.84 L536.96,847.33 L535.29,845.76 L533.78,844.15 L532.44,842.48 L531.27,840.77 L530.27,839.02 L529.46,837.23 L528.82,835.40 L528.37,833.52 L528.09,831.58 L528.00,829.50 L528.09,827.42 L528.37,825.48 L528.82,823.60 L529.46,821.77 L530.27,819.98 L531.27,818.23 L532.44,816.52 L533.78,814.85 L535.29,813.24 L536.96,811.67 L538.80,810.16 L540.79,808.70 L542.94,807.30 L545.24,805.97 L547.68,804.70 L550.26,803.50 L552.97,802.36 L555.80,801.31 L558.76,800.32 L561.83,799.42 L565.00,798.59 L568.28,797.85 L571.66,797.19 L575.12,796.61 L578.68,796.12 L582.32,795.72 L586.04,795.40 L589.85,795.18 L593.78,795.05 L598.00,795.00 L602.22,795.05 L606.15,795.18 L609.96,795.40 L613.68,795.72 L617.32,796.12 L620.88,796.61 L624.34,797.19 L627.72,797.85 L631.00,798.59 L634.17,799.42 L637.24,800.32 L640.20,801.31 L643.03,802.36 L645.74,803.50 L648.32,804.70 L650.76,805.97 L653.06,807.30 L655.21,808.70 L657.20,810.16 L659.04,811.67 L660.71,813.24 L662.22,814.85 L663.56,816.52 L664.73,818.23 L665.73,819.98 L666.54,821.77 L667.18,823.60 L667.63,825.48 L667.91,827.42 Z M661.50,829.50 L661.40,830.53 L661.09,831.71 L660.58,832.96 L659.87,834.25 L658.96,835.56 L657.86,836.88 L656.57,838.20 L655.09,839.51 L653.44,840.81 L651.61,842.09 L649.63,843.35 L647.49,844.57 L645.20,845.76 L642.78,846.91 L640.24,848.01 L637.58,849.06 L634.83,850.05 L631.98,850.99 L629.07,851.87 L626.09,852.68 L623.08,853.43 L620.04,854.10 L616.99,854.70 L613.95,855.22 L610.95,855.67 L608.01,856.04 L605.16,856.33 L602.46,856.53 L599.97,856.66 L598.00,856.70 L596.03,856.66 L593.54,856.53 L590.84,856.33 L587.99,856.04 L585.05,855.67 L582.05,855.22 L579.01,854.70 L575.96,854.10 L572.92,853.43 L569.91,852.68 L566.93,851.87 L564.02,850.99 L561.17,850.05 L558.42,849.06 L555.76,848.01 L553.22,846.91 L550.80,845.76 L548.51,844.57 L546.37,843.35 L544.39,842.09 L542.56,840.81 L540.91,839.51 L539.43,838.20 L538.14,836.88 L537.04,835.56 L536.13,834.25 L535.42,832.96 L534.91,831.71 L534.60,830.53 L534.50,829.50 L534.60,828.47 L534.91,827.29 L535.42,826.04 L536.13,824.75 L537.04,823.44 L538.14,822.12 L539.43,820.80 L540.91,819.49 L542.56,818.19 L544.39,816.91 L546.37,815.65 L548.51,814.43 L550.80,813.24 L553.22,812.09 L555.76,810.99 L558.42,809.94 L561.17,808.95 L564.02,808.01 L566.93,807.13 L569.91,806.32 L572.92,805.57 L575.96,804.90 L579.01,804.30 L582.05,803.78 L585.05,803.33 L587.99,802.96 L590.84,802.67 L593.54,802.47 L596.03,802.34 L598.00,802.30 L599.97,802.34 L602.46,802.47 L605.16,802.67 L608.01,802.96 L610.95,803.33 L613.95,803.78 L616.99,804.30 L620.04,804.90 L623.08,805.57 L626.09,806.32 L629.07,807.13 L631.98,808.01 L634.83,808.95 L637.58,809.94 L640.24,810.99 L642.78,812.09 L645.20,813.24 L647.49,814.43 L649.63,815.65 L651.61,816.91 L653.44,818.19 L655.09,819.49 L656.57,820.80 L657.86,822.12 L658.96,823.44 L659.87,824.75 L660.58,826.04 L661.09,827.29 L661.40,828.47 Z"/>
</svg>
<div class="a chk"></div>
<div class="a chklbl">Show Matching Hash</div>
</body></html>
